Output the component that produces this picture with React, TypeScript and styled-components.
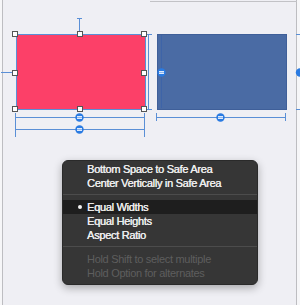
import React, { FC } from 'react';
import styled, { createGlobalStyle } from 'styled-components';

const GlobalStyle = createGlobalStyle`
  html, body {
    margin: 0;
    padding: 0;
    background: #f6f6f8;
    font-family: "Liberation Sans", Arial, sans-serif;
  }
`;

type MenuItem = { label: string; checked?: boolean; highlighted?: boolean; disabled?: boolean } | 'separator';

const items: MenuItem[] = [
  { label: 'Bottom Space to Safe Area' },
  { label: 'Center Vertically in Safe Area' },
  'separator',
  { label: 'Equal Widths', checked: true, highlighted: true },
  { label: 'Equal Heights' },
  { label: 'Aspect Ratio' },
  'separator',
  { label: 'Hold Shift to select multiple', disabled: true },
  { label: 'Hold Option for alternates', disabled: true },
];

const BLUE = '#5a8fd6';
const BADGE = '#2a7be2';

const Handle: FC<{ x: number; y: number }> = ({ x, y }) => (
  <rect x={x - 2.5} y={y - 2.5} width={5} height={5} fill="#fff" stroke="#555" strokeWidth={1} />
);

// constraint badge: blue ring with a small "=" plate inside
const Badge: FC<{ x: number; y: number }> = ({ x, y }) => (
  <g>
    <circle cx={x} cy={y} r={4.2} fill={BADGE} />
    <rect x={x - 2.3} y={y - 1.7} width={4.6} height={3.4} rx={0.6} fill="#dfeafb" />
    <line x1={x - 2.3} y1={y} x2={x + 2.3} y2={y} stroke="#7aa9ea" strokeWidth={0.8} />
  </g>
);

const WidthLine: FC<{ x1: number; x2: number; y: number; top: number; bottom: number }> = ({ x1, x2, y, top, bottom }) => (
  <g stroke={BLUE} strokeWidth={1} fill="none">
    <line x1={x1} y1={y + 0.5} x2={x2} y2={y + 0.5} />
    <line x1={x1 + 0.5} y1={top} x2={x1 + 0.5} y2={bottom} />
    <line x1={x2 - 0.5} y1={top} x2={x2 - 0.5} y2={bottom} />
  </g>
);

const Constraints: FC = () => (
  <Overlay width={300} height={305} viewBox="0 0 300 305">
    {/* frame top edge on the right half */}
    <line x1={150} y1={1.5} x2={297} y2={1.5} stroke="#c2c2c6" />

    <g stroke={BLUE} strokeWidth={1} fill="none">
      {/* top space */}
      <line x1={79.5} y1={18} x2={79.5} y2={34} />
      <line x1={77} y1={18.5} x2={82} y2={18.5} />
      {/* leading space */}
      <line x1={1} y1={72.5} x2={15} y2={72.5} />
      {/* spacing bracket between views */}
      <line x1={148.5} y1={34} x2={148.5} y2={109} />
      <line x1={145} y1={34.5} x2={152} y2={34.5} />
      <line x1={145} y1={109.5} x2={152} y2={109.5} />
      {/* blue view inner line */}
      <line x1={161.5} y1={35} x2={161.5} y2={108} stroke="#3e64a8" />
      {/* trailing bracket */}
      <line x1={296} y1={34.5} x2={300} y2={34.5} />
      <line x1={296} y1={109.5} x2={300} y2={109.5} />
    </g>

    <WidthLine x1={15} x2={145} y={117} top={113} bottom={137} />
    <line x1={15} y1={129.5} x2={145} y2={129.5} stroke={BLUE} />
    <WidthLine x1={156} x2={286} y={117} top={113} bottom={121} />

    <Badge x={79.5} y={117.5} />
    <Badge x={79.5} y={129.5} />
    <Badge x={220.5} y={117.5} />
    <Badge x={161.5} y={72.5} />
    <circle cx={300} cy={72.5} r={4.2} fill={BADGE} />

    <Handle x={15} y={34} />
    <Handle x={79.5} y={34} />
    <Handle x={144} y={34} />
    <Handle x={15} y={72.5} />
    <Handle x={144} y={72.5} />
    <Handle x={15} y={109} />
    <Handle x={79.5} y={109} />
    <Handle x={144} y={109} />
  </Overlay>
);

const App: FC = () => (
  <>
    <GlobalStyle />
    <Canvas>
      <Scene>
        <View $left={15} $color="#fc4068" $edge="#5a8fd6" />
        <View $left={156} $color="#4a6ba4" $edge="#3f5f99" />
      </Scene>
      <Constraints />
      <Menu>
        {items.map((item, i) =>
          item === 'separator' ? (
            <Separator key={i} />
          ) : (
            <Row key={i} $highlighted={item.highlighted} $disabled={item.disabled}>
              {item.checked && <Bullet />}
              {item.label}
            </Row>
          )
        )}
      </Menu>
    </Canvas>
  </>
);

const Canvas = styled.div`
  position: relative;
  width: 300px;
  height: 305px;
  overflow: hidden;
  background: #f6f6f8;
`;

const Scene = styled.div`
  position: absolute;
  left: 2px;
  top: 0;
  width: 295px;
  height: 305px;
  box-sizing: border-box;
  background: #efeff4;
  border-left: 1px solid #bdbdc1;
  border-right: 1px solid #bdbdc1;
`;

const View = styled.div<{ $left: number; $color: string; $edge: string }>`
  position: absolute;
  left: ${({ $left }) => $left - 2}px;
  top: 34px;
  width: 130px;
  height: 76px;
  box-sizing: border-box;
  background: ${({ $color }) => $color};
  border: 1px solid ${({ $edge }) => $edge};
`;

const Overlay = styled.svg`
  position: absolute;
  left: 0;
  top: 0;
  shape-rendering: crispEdges;

  circle {
    shape-rendering: geometricPrecision;
  }
`;

const Menu = styled.div`
  position: absolute;
  left: 62px;
  top: 160px;
  width: 196px;
  height: 125px;
  box-sizing: border-box;
  padding-top: 1px;
  display: flex;
  flex-direction: column;
  background: #363636;
  border: 1px solid #2a2a2a;
  border-radius: 6px;
  box-shadow: 0 3px 8px rgba(0, 0, 0, 0.3);
`;

const Row = styled.div<{ $highlighted?: boolean; $disabled?: boolean }>`
  position: relative;
  height: 14px;
  line-height: 14px;
  padding-left: 24px;
  font-size: 11px;
  letter-spacing: -0.3px;
  white-space: nowrap;
  color: ${({ $disabled }) => ($disabled ? '#5e5e5e' : '#ededed')};
  text-shadow: ${({ $disabled }) => ($disabled ? 'none' : '0.35px 0 0 #ededed')};
  background: ${({ $highlighted }) => ($highlighted ? '#1e1e1e' : 'transparent')};
`;

const Bullet = styled.span`
  position: absolute;
  left: 15px;
  top: 5px;
  width: 4px;
  height: 4px;
  border-radius: 50%;
  background: #f2f2f2;
`;

const Separator = styled.div`
  height: 1px;
  margin: 4px 0 5px;
  background: #4c4c4c;
`;

export default App;
